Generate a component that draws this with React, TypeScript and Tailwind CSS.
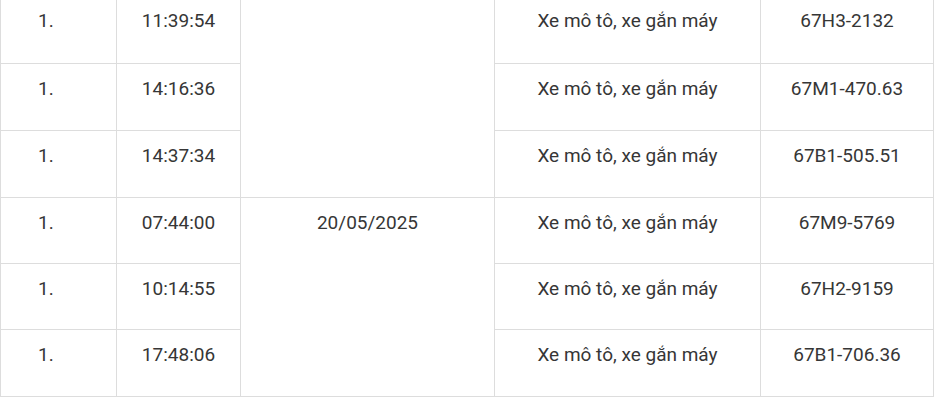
const font = { fontFamily: 'Roboto, "Noto Sans", sans-serif' }

type Row = { stt: string; gio: string; loai: string; bien: string }

const TOP: Row[] = [
  { stt: '1.', gio: '11:39:54', loai: 'Xe mô tô, xe gắn máy', bien: '67H3-2132' },
  { stt: '1.', gio: '14:16:36', loai: 'Xe mô tô, xe gắn máy', bien: '67M1-470.63' },
  { stt: '1.', gio: '14:37:34', loai: 'Xe mô tô, xe gắn máy', bien: '67B1-505.51' },
]

const BOTTOM: Row[] = [
  { stt: '1.', gio: '07:44:00', loai: 'Xe mô tô, xe gắn máy', bien: '67M9-5769' },
  { stt: '1.', gio: '10:14:55', loai: 'Xe mô tô, xe gắn máy', bien: '67H2-9159' },
  { stt: '1.', gio: '17:48:06', loai: 'Xe mô tô, xe gắn máy', bien: '67B1-706.36' },
]

const cell = 'border-r border-b border-[#dddddd] pt-[13px] text-center'

function Cells({ r, date }: { r: Row; date?: React.ReactNode }) {
  return (
    <>
      <div className={`${cell} pl-[37px] !text-left`}>{r.stt}</div>
      <div className={cell}>{r.gio}</div>
      {date}
      <div className={cell}>{r.loai}</div>
      <div className={cell}>{r.bien}</div>
    </>
  )
}

export default function App() {
  return (
    <div className="h-[400px] w-[936px] overflow-hidden bg-white">
      <div
        className="mt-[-4px] grid w-[934px] grid-cols-[116px_124px_254px_266px_173px] grid-rows-[68px_67px_67px_66px_66px_67px] border-l border-[#dddddd] text-[19px] leading-[24px] text-[#363636]"
        style={font}
      >
        {TOP.map((r, i) => (
          <Cells
            key={r.gio}
            r={r}
            date={i === 0 ? <div className={`${cell} row-span-3`} /> : undefined}
          />
        ))}
        {BOTTOM.map((r, i) => (
          <Cells
            key={r.gio}
            r={r}
            date={
              i === 0 ? (
                <div className={`${cell} row-span-3`}>20/05/2025</div>
              ) : undefined
            }
          />
        ))}
      </div>
    </div>
  )
}
